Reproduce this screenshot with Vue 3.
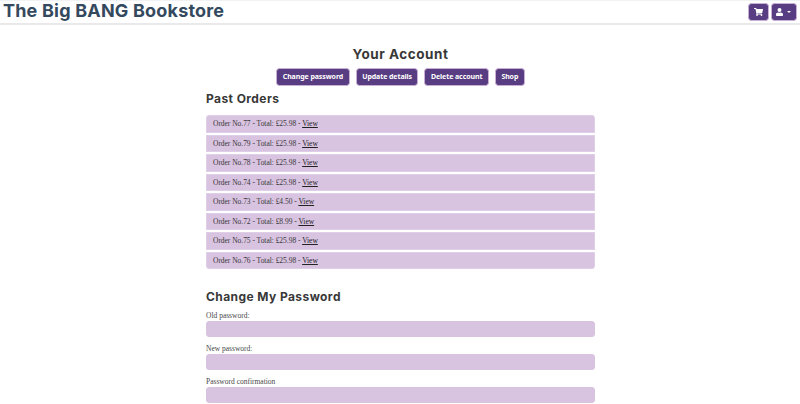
<script setup>
const actions = ['Change password', 'Update details', 'Delete account', 'Shop']
const orders = [
  { id: 77, total: '25.98' },
  { id: 79, total: '25.98' },
  { id: 78, total: '25.98' },
  { id: 74, total: '25.98' },
  { id: 73, total: '4.50' },
  { id: 72, total: '8.99' },
  { id: 75, total: '25.98' },
  { id: 76, total: '25.98' },
]
const fields = ['Old password:', 'New password:', 'Password confirmation']
</script>

<template>
  <div class="page">
    <header class="navbar">
      <div class="brand">The Big BANG Bookstore</div>
      <nav class="tools">
        <button class="tool cart" aria-label="Cart">
          <svg width="9" height="8" viewBox="0 0 576 512"><path fill="currentColor" d="M528 301l47-208c4-15-8-29-23-29H159l-9-45C148 8 138 0 126 0H24C11 0 0 11 0 24v16c0 13 11 24 24 24h70l70 343c-17 10-28 28-28 49 0 31 25 56 56 56s56-25 56-56c0-16-7-30-17-40h210c-10 10-17 24-17 40 0 31 25 56 56 56s56-25 56-56c0-22-13-41-32-50l6-25c3-15-8-29-24-29H218l-7-32h294c11 0 21-8 23-19z" /></svg>
        </button>
        <button class="tool user" aria-label="Account">
          <svg width="7" height="8" viewBox="0 0 448 512"><path fill="currentColor" d="M224 256a128 128 0 1 0 0-256 128 128 0 0 0 0 256zm90 32h-17a174 174 0 0 1-146 0h-17C60 288 0 348 0 422v42c0 27 21 48 48 48h352c27 0 48-21 48-48v-42c0-74-60-134-134-134z" /></svg>
          <i class="caret"></i>
        </button>
      </nav>
    </header>
    <main class="content">
      <h1>Your Account</h1>
      <div class="actions">
        <button v-for="a in actions" :key="a" class="action">{{ a }}</button>
      </div>
      <h2 class="past">Past Orders</h2>
      <ul class="orders">
        <li v-for="o in orders" :key="o.id">Order No.{{ o.id }} - Total: £{{ o.total }} - <a>View</a></li>
      </ul>
      <h2 class="change">Change My Password</h2>
      <form>
        <div v-for="f in fields" :key="f" class="field">
          <label :for="f">{{ f }}</label>
          <input :id="f" type="password" />
        </div>
      </form>
    </main>
  </div>
</template>

<style>
body {
  background: #fff;
  overflow: hidden;
}
</style>

<style scoped>
.page {
  height: 404px;
  overflow: hidden;
  color: #383838;
  font-family: "Liberation Serif", serif;
}
.navbar {
  box-sizing: border-box;
  height: 25px;
  display: flex;
  justify-content: space-between;
  align-items: flex-start;
  padding: 0 3.5px 0 3px;
  border-top: 1px solid #f1f2f4;
  border-bottom: 2px solid #e9e9eb;
}
.brand {
  font: 700 18px/20px Inter, sans-serif;
  color: #34495e;
  letter-spacing: 0.19px;
  white-space: nowrap;
}
.tools {
  display: flex;
  gap: 1.5px;
  padding-top: 2px;
}
button {
  box-sizing: border-box;
  display: flex;
  align-items: center;
  justify-content: center;
  padding: 0;
  height: 18px;
  border: 1px solid #c9b0d4;
  border-radius: 3.5px;
  background: #593d82;
  color: #fff;
  white-space: nowrap;
}
.cart {
  width: 21px;
}
.user {
  width: 26px;
  gap: 4px;
}
.caret {
  border: 2px solid transparent;
  border-top-color: #fff;
  border-bottom: 0;
}
.content {
  width: 389px;
  margin-left: 206px;
}
h1,
h2 {
  margin: 0;
  font-family: Inter, sans-serif;
  font-weight: 700;
  white-space: nowrap;
}
h1 {
  padding-top: 20px;
  font-size: 13.5px;
  line-height: 19px;
  letter-spacing: 0.55px;
  text-align: center;
}
.actions {
  display: flex;
  justify-content: center;
  gap: 6px;
  padding: 4px 0 0;
}
.action {
  padding: 0 5.5px;
  font: 700 7px/16px "Noto Sans", sans-serif;
  letter-spacing: -0.08px;
}
h2 {
  font-size: 12px;
  line-height: 16px;
  letter-spacing: 0.42px;
}
.past {
  padding-top: 5px;
}
.orders {
  display: flex;
  flex-direction: column;
  gap: 2px;
  margin: 8px 0 0;
  padding: 0;
  list-style: none;
}
.orders li {
  box-sizing: border-box;
  height: 17.5px;
  padding-left: 6px;
  border: 1px solid #dfcee7;
  background: #d8c3e1;
  font-size: 7.5px;
  line-height: 15.5px;
  letter-spacing: -0.03px;
}
.orders li:first-child {
  border-radius: 3px 3px 0 0;
}
.orders li:last-child {
  border-radius: 0 0 3px 3px;
}
a {
  color: #222;
  text-decoration: underline;
}
.change {
  padding-top: 20px;
}
form {
  padding-top: 6px;
}
.field {
  height: 33px;
}
label {
  display: block;
  height: 10px;
  color: #484848;
  font-size: 7.5px;
  line-height: 10px;
}
input {
  box-sizing: border-box;
  display: block;
  width: 100%;
  height: 16px;
  border: 1px solid #d8c3e1;
  border-radius: 3px;
  background: #d8c3e1;
}
</style>
